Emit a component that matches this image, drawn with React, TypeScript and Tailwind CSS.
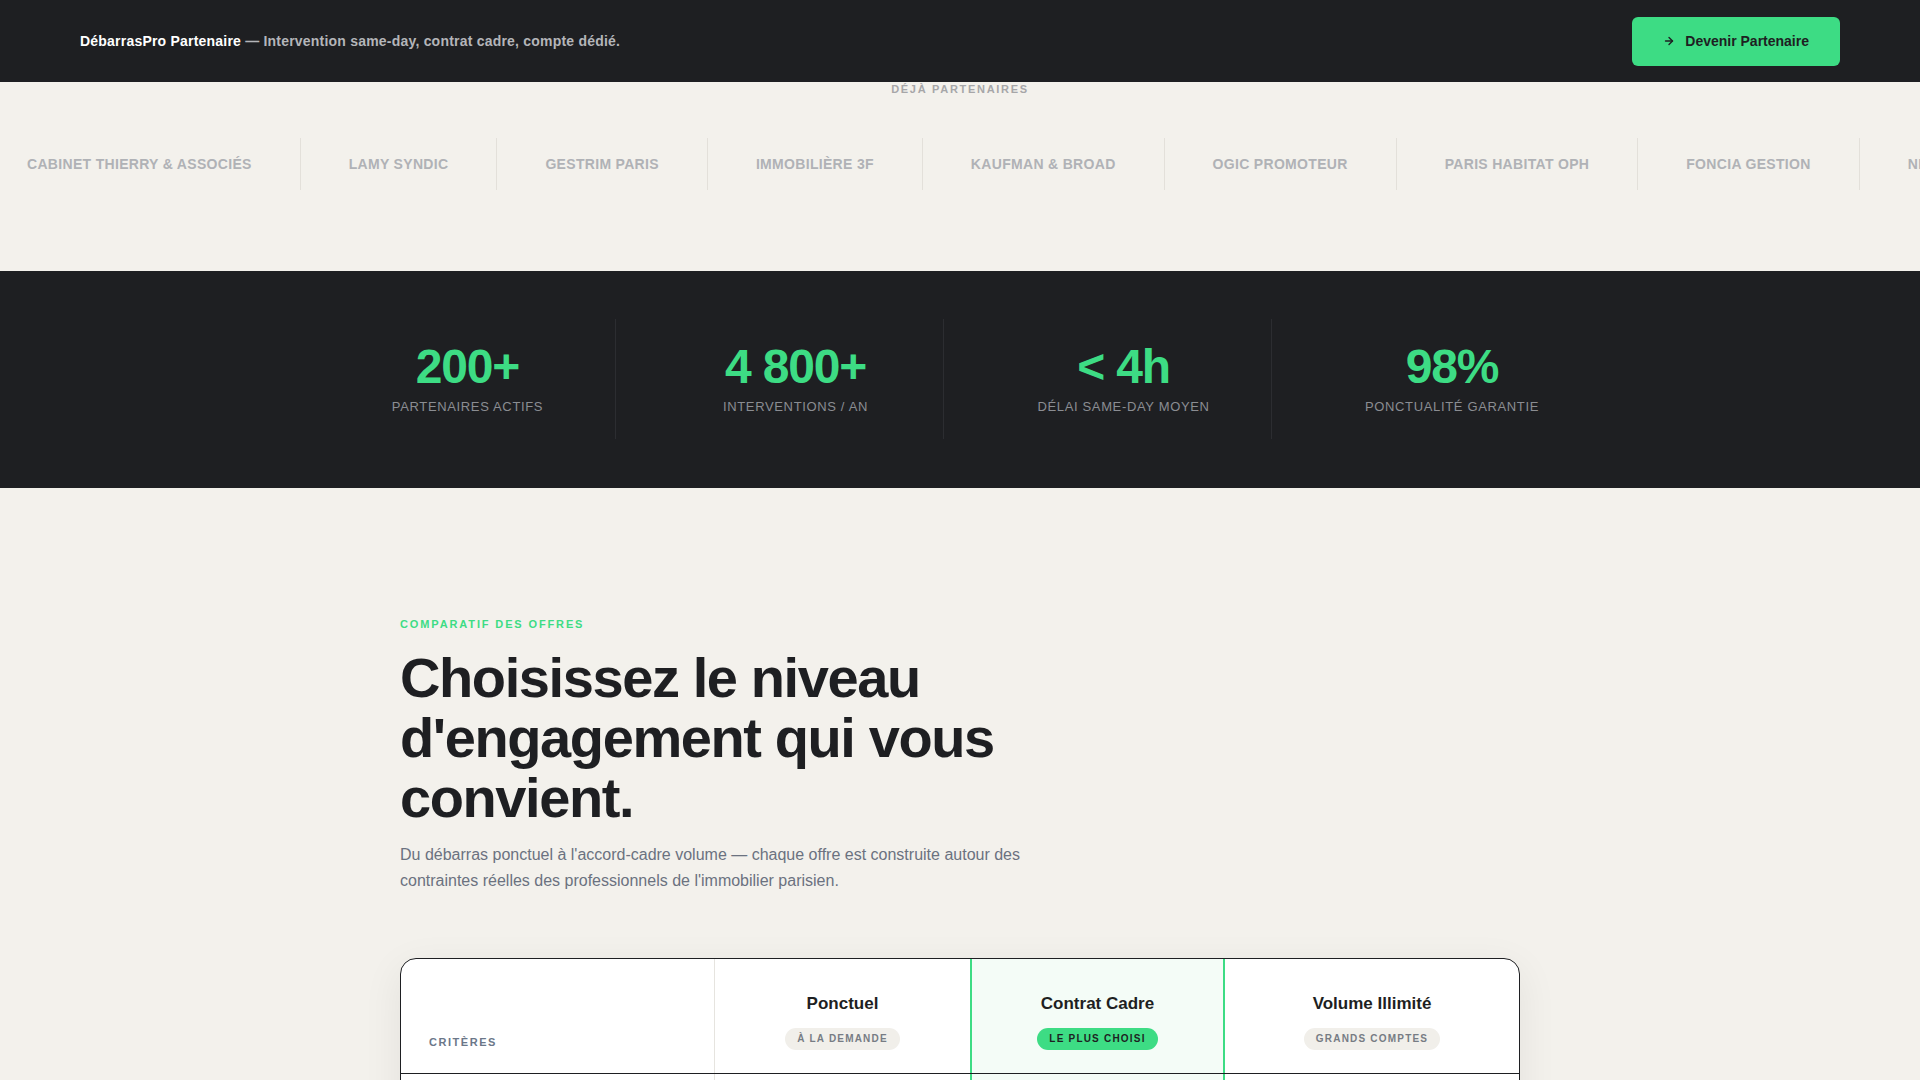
import { ArrowRight } from 'lucide-react'

const partners = [
  'Cabinet Thierry & Associés',
  'Lamy Syndic',
  'Gestrim Paris',
  'Immobilière 3F',
  'Kaufman & Broad',
  'Ogic Promoteur',
  'Paris Habitat OPH',
  'Foncia Gestion',
  'Nexity',
  'Sergic',
  'Citya Immobilier',
]

const stats = [
  { value: '200+', label: 'Partenaires actifs' },
  { value: '4 800+', label: 'Interventions / an' },
  { value: '< 4h', label: 'Délai same-day moyen' },
  { value: '98%', label: 'Ponctualité garantie' },
]

const plans = [
  { name: 'Ponctuel', badge: 'À la demande', featured: false },
  { name: 'Contrat Cadre', badge: 'Le plus choisi', featured: true },
  { name: 'Volume Illimité', badge: 'Grands comptes', featured: false },
]

function TopBar() {
  return (
    <header className="h-[82px] bg-[#1e1f22] px-20 flex items-center justify-between">
      <p className="text-[14px] font-bold tracking-[0.015em] text-[#b4b5b9]">
        <span className="text-white">DébarrasPro Partenaire</span> — Intervention same-day, contrat cadre, compte dédié.
      </p>
      <button className="h-[49px] px-[31px] rounded-md bg-[#3ddc84] text-[#1e1f22] text-[14px] font-bold flex items-center gap-2.5">
        <ArrowRight size={12} strokeWidth={2.75} />
        Devenir Partenaire
      </button>
    </header>
  )
}

function PartnerStrip() {
  return (
    <section className="bg-[#f3f1ec] pb-[81px]">
      <p className="text-center text-[11px] leading-[14px] font-bold tracking-[0.155em] uppercase text-[#a6a6a8]">
        Déjà partenaires
      </p>
      <div className="mt-[42px] overflow-hidden">
        {/* marquee track, scrolled a little to the left */}
        <div className="flex ml-[-21px] w-max">
          {partners.map((name) => (
            <div
              key={name}
              className="px-12 py-4 border-r border-[#e3e0da] text-[14px] leading-5 font-bold uppercase tracking-[0.0225em] text-[#b0b2b6] whitespace-nowrap"
            >
              {name}
            </div>
          ))}
        </div>
      </div>
    </section>
  )
}

function StatsBand() {
  return (
    <section className="bg-[#1e1f22] pt-12 pb-[49px]">
      <div className="w-[1280px] mx-auto grid grid-cols-4 gap-8">
        {stats.map((stat, index) => (
          <div
            key={stat.label}
            className={`py-6 text-center ${index < stats.length - 1 ? 'border-r border-[#2c2d31]' : ''}`}
          >
            <div className="text-5xl leading-none font-bold tracking-tight text-[#3ddc84]">{stat.value}</div>
            <div className="mt-2 text-[13px] leading-4 uppercase tracking-[0.05em] text-[#8b8d92]">
              {stat.label}
            </div>
          </div>
        ))}
      </div>
    </section>
  )
}

function Comparison() {
  return (
    <section className="bg-[#f3f1ec] pt-32 pb-24">
      <div className="w-[1120px] mx-auto">
        <p className="text-[11px] leading-4 font-bold uppercase tracking-[0.17em] text-[#3ddc84]">
          Comparatif des offres
        </p>
        <h2 className="mt-4 max-w-[720px] text-[56px] leading-[60px] font-bold tracking-tight text-[#1e1f22]">
          Choisissez le niveau d'engagement qui vous convient.
        </h2>
        <p className="mt-[14px] max-w-[640px] text-base leading-[26px] text-[#6b7280]">
          Du débarras ponctuel à l'accord-cadre volume — chaque offre est construite autour des contraintes réelles des
          professionnels de l'immobilier parisien.
        </p>

        {/* Offer table */}
        <div className="mt-16 bg-white border border-[#1e1f22] rounded-2xl overflow-hidden shadow-[0_10px_40px_rgba(30,31,34,0.07)]">
          <div className="grid grid-cols-[314px_255px_255px_1fr] border-b border-[#1e1f22]">
            <div className="border-r border-[#e6e4df] pl-7 pb-[24px] flex items-end">
              <span className="text-[11px] leading-[14px] font-bold uppercase tracking-[0.14em] text-[#6b7789]">
                Critères
              </span>
            </div>
            {plans.map((plan) => (
              <div
                key={plan.name}
                className={`pt-[34px] pb-[23px] flex flex-col items-center ${
                  plan.featured ? 'bg-[#f4fcf7] border-x-2 border-[#3ddc84]' : ''
                }`}
              >
                <h3 className="text-[17px] leading-[22px] font-bold text-[#1e1f22]">{plan.name}</h3>
                <span
                  className={`mt-[13px] px-3 py-1 rounded-full text-[10px] leading-[14px] font-bold uppercase tracking-[0.12em] ${
                    plan.featured ? 'bg-[#3ddc84] text-[#1e1f22]' : 'bg-[#f1efea] text-[#777c84]'
                  }`}
                >
                  {plan.badge}
                </span>
              </div>
            ))}
          </div>
          <div className="grid grid-cols-[314px_255px_255px_1fr] h-16">
            <div className="border-r border-[#e6e4df]" />
            <div />
            <div className="bg-[#f4fcf7] border-x-2 border-[#3ddc84]" />
            <div />
          </div>
        </div>
      </div>
    </section>
  )
}

export default function App() {
  return (
    <div className="min-h-screen bg-[#f3f1ec] font-['Liberation_Sans',Arial,sans-serif]">
      <TopBar />
      <PartnerStrip />
      <StatsBand />
      <Comparison />
    </div>
  )
}
